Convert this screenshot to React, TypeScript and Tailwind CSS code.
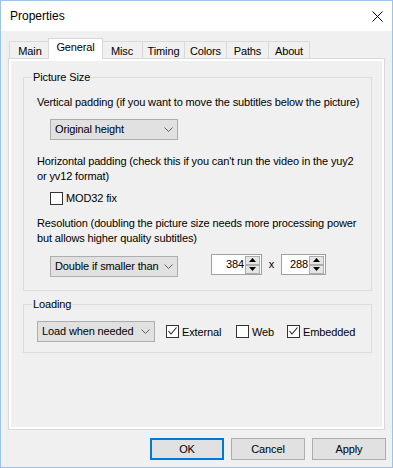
import React from "react";

function Chevron() {
    return (
        <svg width="9" height="5" viewBox="0 0 9 5" className="shrink-0">
            <polyline points="0.5,0.5 4.5,4.5 8.5,0.5" fill="none" stroke="#606060" strokeWidth="1" />
        </svg>
    );
}

function Combo({label, className}: {label: string; className: string}) {
    return (
        <div className={"flex h-[21px] items-center border border-[#adadad] bg-[#e1e1e1] pl-[4px] " + className}>
            <span className="flex-1 whitespace-nowrap leading-[19px]">{label}</span>
            <span className="flex w-[17px] justify-center">
                <Chevron />
            </span>
        </div>
    );
}

function CheckBox({checked, label, className}: {checked: boolean; label: string; className?: string}) {
    return (
        <div className={"flex items-center " + (className || "")}>
            <span className="flex h-[13px] w-[13px] items-center justify-center border border-[#333333] bg-white">
                {checked && (
                    <svg width="11" height="11" viewBox="0 0 11 11">
                        <polyline points="1.5,5 4,8 9.5,1.5" fill="none" stroke="#222" strokeWidth="1.1" />
                    </svg>
                )}
            </span>
            <span className="ml-[3px] whitespace-nowrap leading-[14px]">{label}</span>
        </div>
    );
}

function SpinButton({up}: {up: boolean}) {
    return (
        <div className="flex h-[9px] items-center justify-center border border-[#adadad] bg-[#e5e5e5]">
            <svg width="7" height="4" viewBox="0 0 7 4">
                {up ? <polygon points="3.5,0 7,4 0,4" fill="#000" /> : <polygon points="0,0 7,0 3.5,4" fill="#000" />}
            </svg>
        </div>
    );
}

function Spin({value, className}: {value: string; className: string}) {
    return (
        <div className={"flex h-[21px] border border-[#a0a0a0] bg-white " + className}>
            <div className="flex-1 pr-[1px] text-right leading-[19px]">{value}</div>
            <div className="flex w-[16px] flex-col justify-center pr-[1px]">
                <SpinButton up />
                <SpinButton up={false} />
            </div>
        </div>
    );
}

function Tab({label, className}: {label: string; className: string}) {
    return (
        <div className={"-ml-px flex h-[17px] items-center justify-center self-end border-x border-t border-[#d9d9d9] bg-[#f0f0f0] pt-px " + className}>
            <span className="leading-[14px]">{label}</span>
        </div>
    );
}

function Button({label, primary}: {label: string; primary?: boolean}) {
    return (
        <div
            className={
                "flex h-[22px] w-[74px] items-center justify-center bg-[#e1e1e1] leading-[14px] " +
                (primary ? "border-2 border-[#0078d7]" : "border border-[#adadad]")
            }
        >
            {label}
        </div>
    );
}

export default function App() {
    return (
        <div className="flex h-[468px] w-[393px] flex-col border border-[#9cc3ea] bg-[#f0f0f0] font-['Liberation_Sans',Arial,sans-serif] text-[11px] tracking-[-0.13px] text-black">
            {/* title bar */}
            <div className="flex h-[30px] shrink-0 items-center justify-between bg-white pl-[9px] pr-[9px]">
                <span className="text-[12px] leading-[16px] tracking-normal">Properties</span>
                <svg width="11" height="11" viewBox="0 0 11 11">
                    <path d="M0.5 0.5 L10.5 10.5 M10.5 0.5 L0.5 10.5" stroke="#000" strokeWidth="1" />
                </svg>
            </div>

            <div className="flex flex-col px-[7px] pt-[7px]">
                {/* tabs */}
                <div className="flex h-[20px] pl-[2px]">
                    <Tab label="Main" className="w-[42px]" />
                    <div className="relative z-10 -ml-px h-[20px] w-[52px]">
                        <div className="-ml-[2px] flex h-[21px] w-[55px] justify-center border-x border-t border-[#d9d9d9] bg-white pt-[1px]">
                            <span className="leading-[14px]">General</span>
                        </div>
                    </div>
                    <Tab label="Misc" className="w-[42px]" />
                    <Tab label="Timing" className="w-[43px]" />
                    <Tab label="Colors" className="w-[43px]" />
                    <Tab label="Paths" className="w-[43px]" />
                    <Tab label="About" className="w-[42px]" />
                </div>

                {/* tab page */}
                <div className="h-[372px] border border-[#d9d9d9]">
                    <div className="h-full border-2 border-white bg-[#f0f0f0] pt-[9px]">
                        <fieldset className="ml-[12px] w-[349px] border border-[#dcdcdc] pb-[13px]">
                            <legend className="ml-[8px] px-[1px] leading-[14px]">Picture Size</legend>
                            <div className="flex flex-col items-start pl-[13px]">
                                <p className="mt-[11px] whitespace-nowrap leading-[14px]">
                                    Vertical padding (if you want to move the subtitles below the picture)
                                </p>
                                <Combo label="Original height" className="ml-[13px] mt-[10px] w-[128px]" />
                                <p className="mt-[14px] whitespace-nowrap leading-[15px]">
                                    Horizontal padding (check this if you can't run the video in the yuy2
                                    <br />
                                    or yv12 format)
                                </p>
                                <CheckBox checked={false} label="MOD32 fix" className="ml-[13px] mt-[7px]" />
                                <p className="mt-[11px] whitespace-nowrap leading-[15px]">
                                    Resolution (doubling the picture size needs more processing power
                                    <br />
                                    but allows higher quality subtitles)
                                </p>
                                <div className="mt-[8px] flex items-start">
                                    <Combo label="Double if smaller than" className="ml-[13px] mt-[2px] w-[128px]" />
                                    <Spin value="384" className="ml-[33px] w-[51px]" />
                                    <span className="w-[19px] text-center leading-[21px]">x</span>
                                    <Spin value="288" className="w-[45px]" />
                                </div>
                            </div>
                        </fieldset>

                        <fieldset className="ml-[12px] mt-[6px] w-[349px] border border-[#dcdcdc] pb-[10px]">
                            <legend className="ml-[8px] px-[1px] leading-[14px]">Loading</legend>
                            <div className="mt-[10px] flex items-center pl-[13px]">
                                <Combo label="Load when needed" className="w-[118px]" />
                                <CheckBox checked label="External" className="ml-[11px] w-[70px]" />
                                <CheckBox checked={false} label="Web" className="w-[51px]" />
                                <CheckBox checked label="Embedded" />
                            </div>
                        </fieldset>
                    </div>
                </div>
            </div>

            {/* dialog buttons */}
            <div className="flex justify-end gap-[7px] pr-[6px] pt-[8px]">
                <Button label="OK" primary />
                <Button label="Cancel" />
                <Button label="Apply" />
            </div>
        </div>
    );
}
